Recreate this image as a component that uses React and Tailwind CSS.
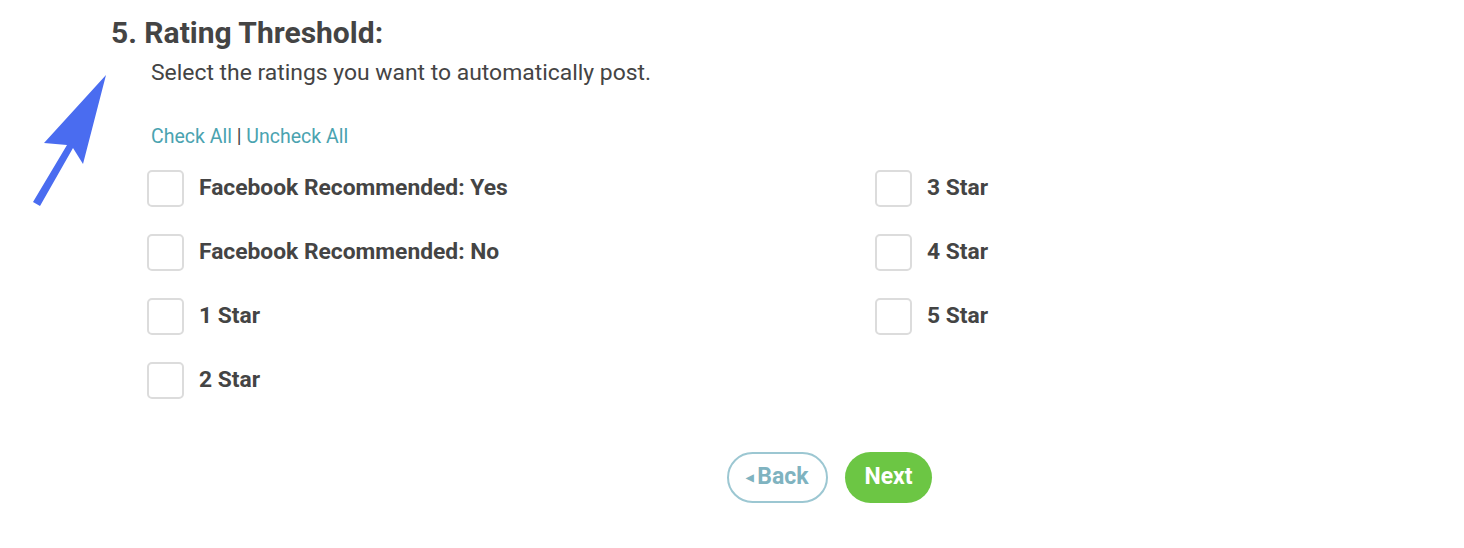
import React, { useState } from "react";

const leftOptions = [
  "Facebook Recommended: Yes",
  "Facebook Recommended: No",
  "1 Star",
  "2 Star",
];
const rightOptions = ["3 Star", "4 Star", "5 Star"];

function Option({ label, checked, onToggle }) {
  return (
    <label className="flex items-center h-[37px] cursor-pointer">
      <input
        type="checkbox"
        checked={checked}
        onChange={onToggle}
        className="appearance-none shrink-0 w-[37px] h-[37px] border-2 border-[#dcdcdc] rounded-[5px] bg-white checked:bg-[#4aa3b0] checked:border-[#4aa3b0]"
      />
      <span className="ml-[15px] text-[22.8px] font-bold text-[#444]">{label}</span>
    </label>
  );
}

export default function App() {
  const all = [...leftOptions, ...rightOptions];
  const [checked, setChecked] = useState({});

  const toggle = (k) => setChecked({ ...checked, [k]: !checked[k] });
  const setAll = (v) => {
    const next = {};
    all.forEach((k) => (next[k] = v));
    setChecked(next);
  };

  return (
    <div
      className="relative w-[1464px] h-[548px] bg-white"
      style={{ fontFamily: "Roboto, 'Liberation Sans', sans-serif" }}
    >
      {/* pointer arrow overlay */}
      <svg className="absolute left-0 top-0" width="130" height="220" viewBox="0 0 130 220">
        <polygon
          points="106,75 83,164 73,148 40,206 33,202 67,145 44,143"
          fill="#4a6cf0"
        />
      </svg>

      <div className="pl-[111px] pt-[16px]">
        <h2 className="text-[30px] font-bold text-[#444] leading-[34px]">
          5. Rating Threshold:
        </h2>
        <div className="pl-[40px]">
          <p className="mt-[10px] text-[22.9px] text-[#444] leading-[26px]">
            Select the ratings you want to automatically post.
          </p>
          <div className="mt-[39px] text-[19.5px] leading-[24px] text-[#4aa3b0]">
            <button onClick={() => setAll(true)} className="hover:underline">
              Check All
            </button>
            <span className="text-[#444]"> | </span>
            <button onClick={() => setAll(false)} className="hover:underline">
              Uncheck All
            </button>
          </div>
        </div>

        <div className="flex mt-[21px] pl-[36px]">
          <div className="w-[728px] flex flex-col gap-[27px]">
            {leftOptions.map((o) => (
              <Option key={o} label={o} checked={!!checked[o]} onToggle={() => toggle(o)} />
            ))}
          </div>
          <div className="flex flex-col gap-[27px]">
            {rightOptions.map((o) => (
              <Option key={o} label={o} checked={!!checked[o]} onToggle={() => toggle(o)} />
            ))}
          </div>
        </div>
      </div>

      <div className="flex gap-[17px] pl-[727px] mt-[53px]">
        <button className="flex items-center justify-center w-[101px] h-[51px] rounded-full border-2 border-[#9cc7d2] text-[#7fb3c0] text-[23px] font-bold">
          <span className="text-[10px] mr-[3px]">◀</span>Back
        </button>
        <button className="w-[87px] h-[51px] rounded-full bg-[#6cc644] text-white text-[23px] font-bold">
          Next
        </button>
      </div>
    </div>
  );
}
